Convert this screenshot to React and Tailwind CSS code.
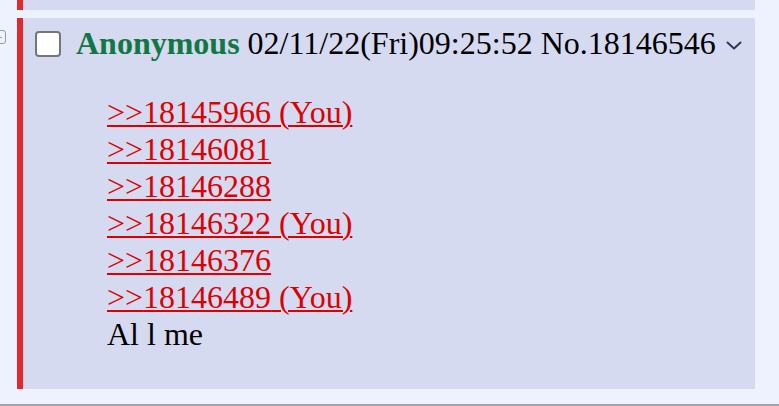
export default function App() {
  const links = [
    { n: "18145966", you: true },
    { n: "18146081", you: false },
    { n: "18146288", you: false },
    { n: "18146322", you: true },
    { n: "18146376", you: false },
    { n: "18146489", you: true },
  ];
  return (
    <div
      className="h-[406px] bg-[#eef2ff] border-b-2 border-[#a3a3a3] flex flex-col overflow-hidden text-black"
      style={{ fontFamily: '"Liberation Serif", "Times New Roman", serif' }}
    >
      <div className="ml-[17px] w-[738px] h-[10px] shrink-0 bg-[#d6daf0] border-l-[6px] border-[#e0292d]" />
      <div className="mt-[8px] flex items-start">
        <div className="w-[17px] shrink-0 pt-[12px]">
          <div className="ml-[-8px] w-[14px] h-[14px] border border-[#9a9aa8] rounded-[3px] flex items-center justify-center">
            <div className="w-[5px] h-[1px] bg-[#9a9aa8]" />
          </div>
        </div>
        <div className="w-[738px] h-[371px] bg-[#d6daf0] border-l-[6px] border-[#e0292d] pt-[7px]">
          <div className="flex items-center text-[32px] leading-[37px] h-[37px]">
            <div className="ml-[12px] w-[26px] h-[26px] border-2 border-[#767676] rounded-[4px] bg-white shrink-0" />
            <span className="ml-[15px] font-bold text-[#117743]">Anonymous</span>
            <span className="ml-[8px] whitespace-nowrap">02/11/22(Fri)09:25:52 No.18146546</span>
            <svg className="ml-[10px] mt-[4px]" width="16" height="9" viewBox="0 0 16 9" fill="none">
              <path d="M1.5 1.5 L8 7.5 L14.5 1.5" stroke="#34345c" strokeWidth="2" strokeLinecap="round" strokeLinejoin="round" />
            </svg>
          </div>
          <div className="mt-[32px] ml-[84px] text-[32px] leading-[37px]">
            {links.map((l) => (
              <div key={l.n}>
                <span className="text-[#dd0000] underline decoration-2 underline-offset-[2px]">
                  &gt;&gt;{l.n}
                  {l.you ? " (You)" : ""}
                </span>
              </div>
            ))}
            <div>Al l me</div>
          </div>
        </div>
      </div>
    </div>
  );
}
